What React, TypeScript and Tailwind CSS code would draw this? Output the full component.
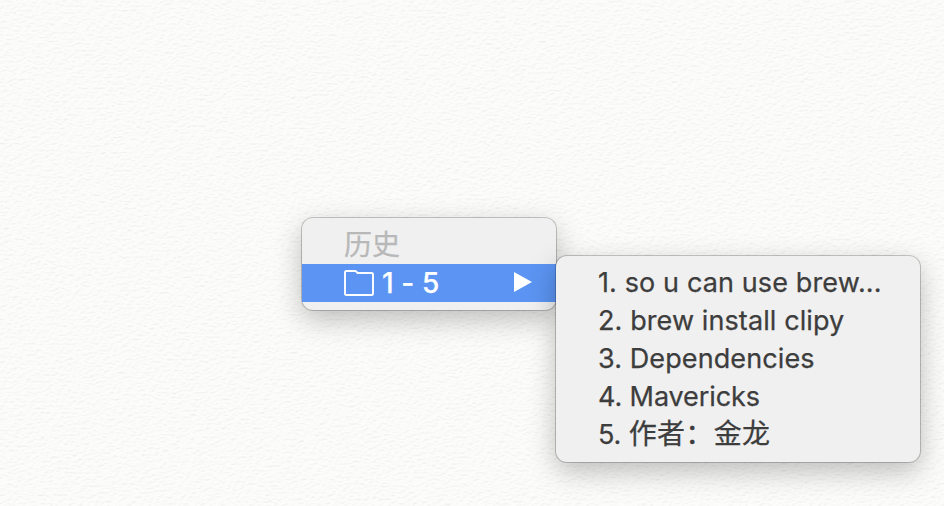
import React from "react";

function PaperTexture() {
  return (
    <svg className="absolute inset-0 h-full w-full" aria-hidden="true">
      <filter id="paper" x="0" y="0" width="100%" height="100%" colorInterpolationFilters="sRGB">
        <feTurbulence type="fractalNoise" baseFrequency="0.22 0.45" numOctaves="4" seed="8" result="noise" />
        <feDiffuseLighting in="noise" lightingColor="#fffffd" surfaceScale="0.42" diffuseConstant="1.132">
          <feDistantLight azimuth="250" elevation="60" />
        </feDiffuseLighting>
      </filter>
      <rect width="100%" height="100%" filter="url(#paper)" opacity="0.32" />
    </svg>
  );
}

function FolderIcon() {
  return (
    <svg className="ml-[42px] mt-[6px] h-[26px] w-[30px] shrink-0" viewBox="0 0 30 26" fill="none" stroke="white" strokeWidth="1.9" strokeLinejoin="round">
      <path d="M1 2.3Q1 1 2.3 1H11Q12.3 1 12.8 2L13.4 3H27.7Q29 3 29 4.3V23.7Q29 25 27.7 25H2.3Q1 25 1 23.7Z" />
    </svg>
  );
}

const items = [
  { label: "1. so u can use brew...", style: "tracking-[0.12px]" },
  { label: "2. brew install clipy", style: "tracking-[0.1px]" },
  { label: "3. Dependencies", style: "tracking-[0.1px]" },
  { label: "4. Mavericks", style: "tracking-[-0.1px]" },
];

const panel =
  "absolute rounded-[11px] bg-[#f0f0f0] py-2 shadow-[0_0_0_1px_rgba(0,0,0,0.2),0_9px_28px_rgba(0,0,0,0.26)]";

export default function App() {
  return (
    <main className="relative h-[506px] w-[944px] overflow-hidden bg-[#fcfcfa] font-['Inter','Noto_Sans_CJK_SC',sans-serif] text-[27px] leading-[38px] text-[#3d3d3d] [-webkit-text-stroke:0.25px_currentColor]">
      <PaperTexture />
      <section className={`${panel} left-[302px] top-[218px] h-[92px] w-[254px]`}>
        <div className="h-[38px] pl-[42px] text-[28px] text-[#b8b8b8]">历史</div>
        <div className="flex h-[38px] items-start bg-[#5b94f2] text-white">
          <FolderIcon />
          <span className="ml-[8px] whitespace-pre text-[28px] font-medium tracking-[0.1px]">1 - 5</span>
          <svg className="ml-auto mr-[24px] mt-[8px] h-[20px] w-[18px]" viewBox="0 0 18 20" fill="white">
            <path d="M0 0L18 10L0 20Z" />
          </svg>
        </div>
      </section>
      <section className={`${panel} left-[556px] top-[256px] h-[206px] w-[364px]`}>
        {items.map((item) => (
          <div key={item.label} className={`h-[38px] whitespace-pre pl-[42px] ${item.style}`}>
            {item.label}
          </div>
        ))}
        <div className="h-[38px] whitespace-pre pl-[42px] tracking-[-0.1px]">
          5. <span className="text-[28px] leading-none tracking-[0.3px]">作者：金龙</span>
        </div>
      </section>
    </main>
  );
}
